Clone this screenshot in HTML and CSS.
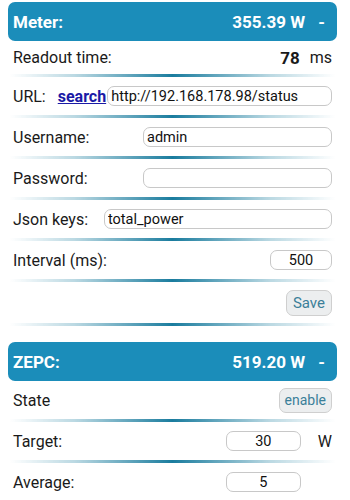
FILE: index.html
```html
<!DOCTYPE html>
<html>
<head>
<title>Power Control</title>
<link rel="stylesheet" href="styles.css">
</head>
<body>

<div class="panel">
  <div class="head">
    <span>Meter:</span>
    <span class="power">355.39 W <span class="toggle">-</span></span>
  </div>
  <div class="row short">
    <span>Readout time:</span>
    <span class="right"><b class="big">78</b><span class="unit">ms</span></span>
  </div>
  <div class="sep"></div>
  <div class="row">
    <span>URL:</span>
    <a href="#" class="link">search</a>
    <input type="text" class="field grow" value="http://192.168.178.98/status">
  </div>
  <div class="sep"></div>
  <div class="row">
    <span>Username:</span>
    <input type="text" class="field wide" value="admin">
  </div>
  <div class="sep"></div>
  <div class="row">
    <span>Password:</span>
    <input type="password" class="field wide" value="">
  </div>
  <div class="sep"></div>
  <div class="row">
    <span>Json keys:</span>
    <input type="text" class="field keys" value="total_power">
  </div>
  <div class="sep"></div>
  <div class="row">
    <span>Interval (ms):</span>
    <input type="text" class="field num" value="500">
  </div>
  <div class="sep"></div>
  <div class="row tall">
    <button class="btn right">Save</button>
  </div>
  <div class="sep"></div>
</div>

<div class="panel second">
  <div class="head">
    <span>ZEPC:</span>
    <span class="power">519.20 W <span class="toggle">-</span></span>
  </div>
  <div class="row">
    <span>State</span>
    <button class="btn small right">enable</button>
  </div>
  <div class="sep"></div>
  <div class="row">
    <span>Target:</span>
    <span class="right"><input type="text" class="field mid" value="30"><span class="watt">W</span></span>
  </div>
  <div class="sep"></div>
  <div class="row">
    <span>Average:</span>
    <span class="right"><input type="text" class="field mid" value="5"><span class="watt blank">W</span></span>
  </div>
</div>

</body>
</html>
```

FILE: styles.css
```css
body {
  margin: 0;
  font-family: Roboto, "Noto Sans", sans-serif;
  font-size: 16px;
  color: #1a1a1a;
  background: #fff;
}
.panel {
  padding: 2px 13px 0 8px;
}
.second {
  margin-top: 16px;
  padding-top: 0;
}
.head {
  display: flex;
  justify-content: space-between;
  align-items: center;
  height: 39px;
  padding: 0 12px 0 5px;
  border-radius: 7px;
  background-color: #1b8dba;
  color: #fff;
  font-weight: bold;
  font-size: 17px;
}
.toggle {
  margin-left: 9px;
}
.row {
  display: flex;
  align-items: center;
  height: 38px;
  padding: 0 5px;
}
.row.short {
  height: 33px;
}
.row.tall {
  height: 41px;
}
.right {
  margin-left: auto;
  display: flex;
  align-items: center;
}
.big {
  font-size: 17px;
}
.unit {
  margin-left: 10px;
}
.sep {
  height: 3px;
  margin: 0 2px;
  background: linear-gradient(to right, rgba(27, 127, 160, 0) 0%, rgba(27, 127, 160, 0.3) 20%, #1a7c9e 50%, rgba(27, 127, 160, 0.3) 80%, rgba(27, 127, 160, 0) 100%);
  filter: blur(0.6px);
}
.link {
  margin-left: 12px;
  color: #1a1aa6;
  font-weight: bold;
}
.field {
  box-sizing: border-box;
  height: 20px;
  border: 1.5px solid #c8c8c8;
  border-radius: 7px;
  padding: 0 3px;
  font-family: Roboto, "Noto Sans", sans-serif;
  font-size: 14.5px;
  color: #111;
  background: #fff;
}
.grow {
  flex: 1;
  margin-left: 1px;
}
.wide {
  margin-left: auto;
  width: 189px;
}
.keys {
  margin-left: auto;
  width: 228px;
}
.num {
  margin-left: auto;
  width: 62px;
  text-align: center;
}
.mid {
  width: 75px;
  text-align: center;
}
.watt {
  margin-left: 17px;
}
.blank {
  visibility: hidden;
}
.btn {
  height: 26px;
  padding: 0 6px;
  border: 1.5px solid #cfcfcf;
  border-radius: 7px;
  background-color: #eceeef;
  color: #3b7f99;
  font-family: Roboto, "Noto Sans", sans-serif;
  font-size: 15px;
}
.btn.small {
  font-size: 14px;
  height: 25px;
  padding: 0 5px;
}
```
